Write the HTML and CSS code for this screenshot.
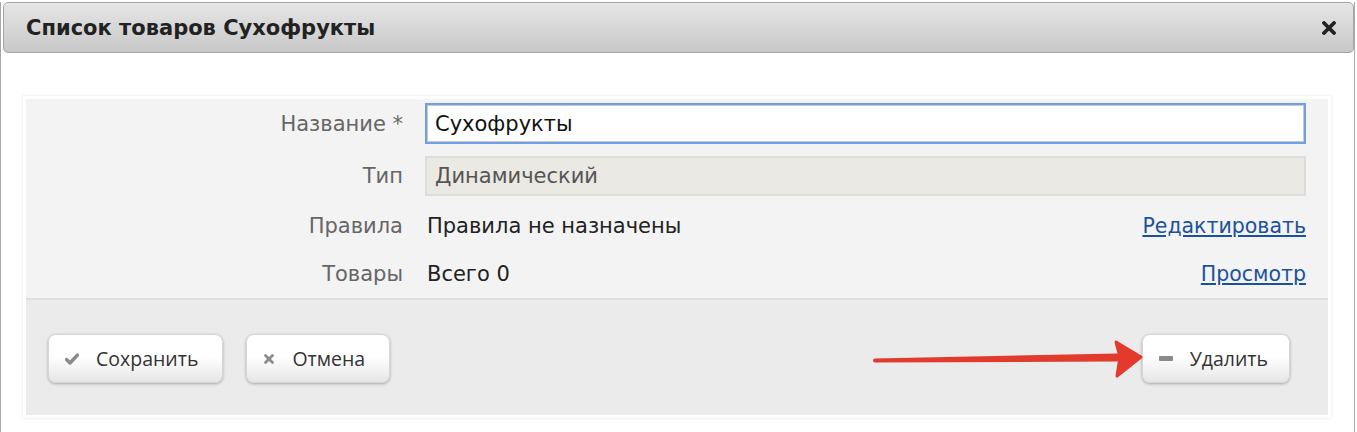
FILE: index.html
```html
<!DOCTYPE html>
<html lang="ru">
<head>
    <meta charset="UTF-8">
    <title>Список товаров Сухофрукты</title>
    <link rel="stylesheet" href="styles.css">
</head>
<body>
<div class="dialog">
    <div class="dialog-title">
        <h1>Список товаров Сухофрукты</h1>
        <span class="close">
            <svg width="14" height="14" viewBox="0 0 14 14"><path d="M2 2 L12 12 M12 2 L2 12" stroke="#222" stroke-width="3.8" stroke-linecap="round"/></svg>
        </span>
    </div>

    <div class="form-panel">
        <div class="form-fields">
            <label class="field-label">Название *</label>
            <div class="field-value wide"><input type="text" class="text-input" value="Сухофрукты"></div>

            <label class="field-label">Тип</label>
            <div class="field-value wide"><input type="text" class="text-input disabled" value="Динамический" disabled></div>

            <label class="field-label">Правила</label>
            <div class="field-value">Правила не назначены</div>
            <a href="#" class="field-link">Редактировать</a>

            <label class="field-label">Товары</label>
            <div class="field-value">Всего 0</div>
            <a href="#" class="field-link">Просмотр</a>
        </div>

        <div class="form-actions">
            <button class="btn">
                <svg width="14" height="12" viewBox="0 0 14 12"><path d="M1.5 6.5 L5 10 L12.5 2" fill="none" stroke="#8a8a8a" stroke-width="3.4" stroke-linecap="round" stroke-linejoin="round"/></svg>
                Сохранить
            </button>
            <button class="btn">
                <svg width="12" height="12" viewBox="0 0 12 12"><path d="M2.5 2.5 L9.5 9.5 M9.5 2.5 L2.5 9.5" stroke="#8a8a8a" stroke-width="2.8" stroke-linecap="round"/></svg>
                Отмена
            </button>
            <div class="spacer"></div>
            <button class="btn btn-delete">
                <svg width="14" height="6" viewBox="0 0 14 6"><rect x="0" y="0" width="14" height="5" rx="1" fill="#8a8a8a"/></svg>
                Удалить
            </button>

            <!-- pointer arrow over the panel -->
            <svg class="arrow" width="290" height="40" viewBox="0 0 290 40">
                <path d="M2 20.5 L244 15.5 L244 19.5 Z" fill="#e23b2e" stroke="#e23b2e" stroke-width="4" stroke-linejoin="round"/>
                <path d="M243 2 L268 17 L244 36 L247 17 Z" fill="#e23b2e" stroke="#e23b2e" stroke-width="3" stroke-linejoin="round"/>
            </svg>
        </div>
    </div>
</div>
</body>
</html>
```

FILE: styles.css
```css
body {
    margin: 0;
    padding: 0;
    background: #fff;
    font-family: 'DejaVu Sans', Verdana, sans-serif;
    color: #222;
}

.dialog {
    width: 1353px;
    height: 432px;
    border-left: 1px solid #a9a9a9;
    border-right: 1px solid #a9a9a9;
}

.dialog-title {
    display: flex;
    align-items: center;
    justify-content: space-between;
    height: 49px;
    margin: 2px 0 0 2px;
    padding: 0 17px 0 22px;
    border: 1px solid #a5a5a5;
    border-radius: 5px;
    background: linear-gradient(to bottom, #e6e6e6, #c8c8c8);
}

.dialog-title h1 {
    margin: 0;
    font-size: 21px;
    font-weight: bold;
    color: #222;
}

.close {
    display: flex;
}

.form-panel {
    position: relative;
    margin: 43px 0 0 22px;
    width: 1302px;
    border: 3px solid #fff;
    box-shadow: 0 0 3px rgba(0, 0, 0, 0.12);
}

.form-fields {
    display: grid;
    grid-template-columns: 377px 1fr auto;
    grid-template-rows: 41px 40px 36px 36px;
    column-gap: 22px;
    row-gap: 12px;
    padding: 4px 22px 6px 0;
    background: #f3f3f3;
    border-bottom: 2px solid #dedede;
    font-size: 21px;
}

.field-label {
    display: flex;
    align-items: center;
    justify-content: flex-end;
    color: #666;
}

.field-value {
    display: flex;
    align-items: center;
    padding-left: 2px;
    color: #222;
}

.field-value.wide {
    grid-column: 2 / 4;
    padding-left: 0;
}

.field-link {
    display: flex;
    align-items: center;
    justify-content: flex-end;
    font-size: 20.5px;
    color: #1c529b;
    text-decoration: underline;
}

.text-input {
    width: 100%;
    height: 100%;
    box-sizing: border-box;
    padding: 0 8px;
    font-family: inherit;
    font-size: 21px;
    color: #111;
    background: #fff;
    border: 2px solid #6f9fe6;
    box-shadow: inset 0 0 0 1px #c9c9c9;
    outline: none;
}

.text-input.disabled {
    color: #555;
    background: #ebe9e3;
    border: 2px solid #dcdcd8;
    box-shadow: none;
}

.form-actions {
    position: relative;
    display: flex;
    align-items: center;
    gap: 23px;
    height: 115px;
    padding: 0 38px 0 22px;
    background: #ebebeb;
}

.spacer {
    flex: 1;
}

.btn {
    display: flex;
    align-items: center;
    gap: 17px;
    height: 49px;
    margin-top: 2px;
    padding: 0 24px 0 16px;
    font-family: 'Open Sans', sans-serif;
    font-size: 19.5px;
    color: #333;
    background: linear-gradient(to bottom, #ffffff 45%, #e6e6e6);
    border: 1px solid #d6d6d6;
    border-radius: 8px;
    box-shadow: 0 1px 3px rgba(0, 0, 0, 0.3);
    cursor: pointer;
}

.btn-delete {
    padding-right: 21px;
}

.arrow {
    position: absolute;
    left: 847px;
    top: 40px;
}
```
